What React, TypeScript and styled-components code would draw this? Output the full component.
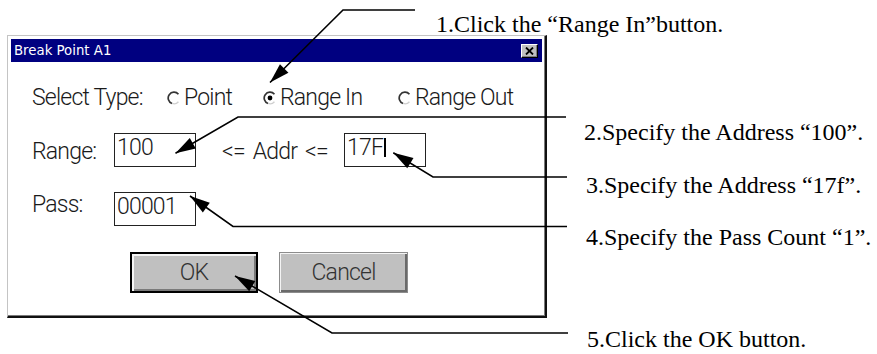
import React from "react";
import styled, { createGlobalStyle, css } from "styled-components";

const GlobalStyle = createGlobalStyle`
  html, body { margin: 0; padding: 0; background: #ffffff; }
  #root { width: 877px; height: 354px; }
`;

const UI_FONT = `Roboto, "Liberation Sans", sans-serif`;

const Page = styled.div`
  position: relative;
  width: 877px;
  height: 354px;
  background: #ffffff;
  overflow: hidden;
`;

const Header = styled.div`
  height: 35px;
  display: flex;
  align-items: flex-start;
`;

const Note = styled.div<{ $mt?: number; $indent?: number }>`
  font-family: "Liberation Serif", "Times New Roman", serif;
  font-size: 24px;
  line-height: 28px;
  color: #000;
  white-space: nowrap;
  margin-top: ${(p) => p.$mt ?? 0}px;
  margin-left: ${(p) => p.$indent ?? 0}px;
`;

const Main = styled.div`
  display: flex;
  align-items: flex-start;
`;

const Notes = styled.div`
  display: flex;
  flex-direction: column;
  margin-left: 37px;
`;

const Dialog = styled.div`
  box-sizing: border-box;
  width: 540px;
  height: 283px;
  margin-left: 7px;
  border-style: solid;
  border-width: 1px 2px 2px 1px;
  border-color: #c4c4c4 #111 #111 #c4c4c4;
  box-shadow: inset -1px -1px 0 #7a7a7a;
  padding: 3px;
  background: #fff;
  display: flex;
  flex-direction: column;
`;

const TitleBar = styled.div`
  height: 23px;
  flex: none;
  background: #000080;
  display: flex;
  align-items: center;
  justify-content: space-between;
  padding: 0 4px 0 3px;
`;

const TitleText = styled.span`
  font-family: "DejaVu Sans", sans-serif;
  font-size: 13.3px;
  color: #fff;
  white-space: nowrap;
`;

const CloseBtn = styled.div`
  box-sizing: border-box;
  width: 17px;
  height: 14px;
  background: #c0c0c0;
  border: 1px solid;
  border-color: #fff #000 #000 #fff;
  box-shadow: inset -1px -1px 0 #808080;
  display: flex;
  align-items: center;
  justify-content: center;
`;

const Body = styled.div`
  flex: 1;
  display: flex;
  flex-direction: column;
  padding: 24px 0 0 21px;
  font-family: ${UI_FONT};
  font-size: 23px;
  font-weight: 300;
  letter-spacing: -0.8px;
  line-height: 23px;
  color: #1a1a1a;
`;

const TypeRow = styled.div`
  display: grid;
  grid-template-columns: 135px 96px 135px auto;
  align-items: center;
  height: 23px;
`;

const Option = styled.div`
  display: flex;
  align-items: center;
  gap: 3px;
  white-space: nowrap;
`;

const FieldRow = styled.div<{ $mt: number }>`
  display: flex;
  align-items: flex-start;
  margin-top: ${(p) => p.$mt}px;
`;

const FieldLabel = styled.div<{ $mt: number }>`
  width: 82px;
  margin-top: ${(p) => p.$mt}px;
  white-space: nowrap;
`;

const Field = styled.div`
  box-sizing: border-box;
  width: 82px;
  height: 34px;
  border: 1px solid #222;
  padding: 2px 2px 0;
  display: flex;
  align-items: flex-start;
  white-space: nowrap;
`;

const Connector = styled.div`
  margin: 7px 21px 0 26px;
  white-space: nowrap;
  width: 101px;
  word-spacing: 3px;
`;

const Caret = styled.span`
  display: inline-block;
  width: 2px;
  height: 19px;
  background: #000;
  margin: 2px 0 0 1px;
`;

const ButtonRow = styled.div`
  display: flex;
  gap: 21px;
  margin-top: 26px;
  padding-left: 98px;
`;

const Button = styled.div<{ $default?: boolean }>`
  box-sizing: border-box;
  height: 41px;
  background: #c0c0c0;
  display: flex;
  align-items: center;
  justify-content: center;
  color: #333;
  ${(p) =>
    p.$default
      ? css`
          width: 128px;
          border: 2px solid #000;
          box-shadow: inset 2px 2px 0 #f4f4f4, inset -2px -2px 0 #7a7a7a;
        `
      : css`
          width: 129px;
          border: 1px solid #8c8c8c;
          box-shadow: inset 1px 1px 0 #f4f4f4, inset -2px -2px 0 #6a6a6a;
        `}
`;

const Overlay = styled.svg`
  position: absolute;
  left: 0;
  top: 0;
  pointer-events: none;
`;

const Radio: React.FC<{ checked?: boolean }> = ({ checked }) => {
  const c = 7;
  const r = 5.8;
  const pt = (deg: number) => {
    const a = (deg * Math.PI) / 180;
    return `${c + r * Math.cos(a)},${c + r * Math.sin(a)}`;
  };
  return (
    <svg width="14" height="14" viewBox="0 0 14 14">
      <path d={`M ${pt(-40)} A ${r} ${r} 0 1 0 ${pt(110)}`} fill="none" stroke="#333" strokeWidth="1.7" />
      <path d={`M ${pt(110)} A ${r} ${r} 0 0 0 ${pt(40)}`} fill="none" stroke="#cfcfcf" strokeWidth="1.3" />
      {checked && <circle cx={c} cy={c} r={2.4} fill="#000" />}
    </svg>
  );
};

type P = [number, number];
const leaders: P[][] = [
  [[270, 82.5], [343, 10], [415, 10]],
  [[175.5, 153.3], [238, 117], [566, 117]],
  [[393.3, 152.8], [433, 177], [567, 177]],
  [[190, 196], [233, 226.5], [567, 226.5]],
  [[235, 276], [332, 333], [568, 333]],
];

const head = (tip: P, from: P, len = 20, w = 12) => {
  const dx = tip[0] - from[0];
  const dy = tip[1] - from[1];
  const d = Math.hypot(dx, dy);
  const ux = dx / d;
  const uy = dy / d;
  const bx = tip[0] - ux * len;
  const by = tip[1] - uy * len;
  const px = (-uy * w) / 2;
  const py = (ux * w) / 2;
  return `${tip[0]},${tip[1]} ${bx + px},${by + py} ${bx - px},${by - py}`;
};

export default function App() {
  return (
    <Page>
      <GlobalStyle />
      <Header>
        <Note $mt={10} $indent={436}>1.Click the “Range In”button.</Note>
      </Header>
      <Main>
        <Dialog>
          <TitleBar>
            <TitleText>Break Point A1</TitleText>
            <CloseBtn>
              <svg width="9" height="8" viewBox="0 0 9 8">
                <path d="M1 0.5 L8 7.5 M8 0.5 L1 7.5" stroke="#000" strokeWidth="1.8" />
              </svg>
            </CloseBtn>
          </TitleBar>
          <Body>
            <TypeRow>
              <span>Select Type:</span>
              <Option>
                <Radio />
                <span>Point</span>
              </Option>
              <Option>
                <Radio checked />
                <span>Range In</span>
              </Option>
              <Option>
                <Radio />
                <span>Range Out</span>
              </Option>
            </TypeRow>
            <FieldRow $mt={24}>
              <FieldLabel $mt={7}>Range:</FieldLabel>
              <Field>100</Field>
              <Connector>&lt;= Addr &lt;=</Connector>
              <Field>
                17F
                <Caret />
              </Field>
            </FieldRow>
            <FieldRow $mt={25}>
              <FieldLabel $mt={1}>Pass:</FieldLabel>
              <Field>00001</Field>
            </FieldRow>
            <ButtonRow>
              <Button $default>OK</Button>
              <Button>Cancel</Button>
            </ButtonRow>
          </Body>
        </Dialog>
        <Notes>
          <Note $mt={83}>2.Specify the Address “100”.</Note>
          <Note $mt={25} $indent={2}>3.Specify the Address “17f”.</Note>
          <Note $mt={24} $indent={2}>4.Specify the Pass Count “1”.</Note>
          <Note $mt={74} $indent={3}>5.Click the OK button.</Note>
        </Notes>
      </Main>
      <Overlay width="877" height="354" viewBox="0 0 877 354">
        {leaders.map((pts, i) => (
          <g key={i}>
            <polyline
              points={pts.map((p) => p.join(",")).join(" ")}
              fill="none"
              stroke="#000"
              strokeWidth="1.6"
            />
            <polygon points={head(pts[0], pts[1])} fill="#000" />
          </g>
        ))}
      </Overlay>
    </Page>
  );
}
